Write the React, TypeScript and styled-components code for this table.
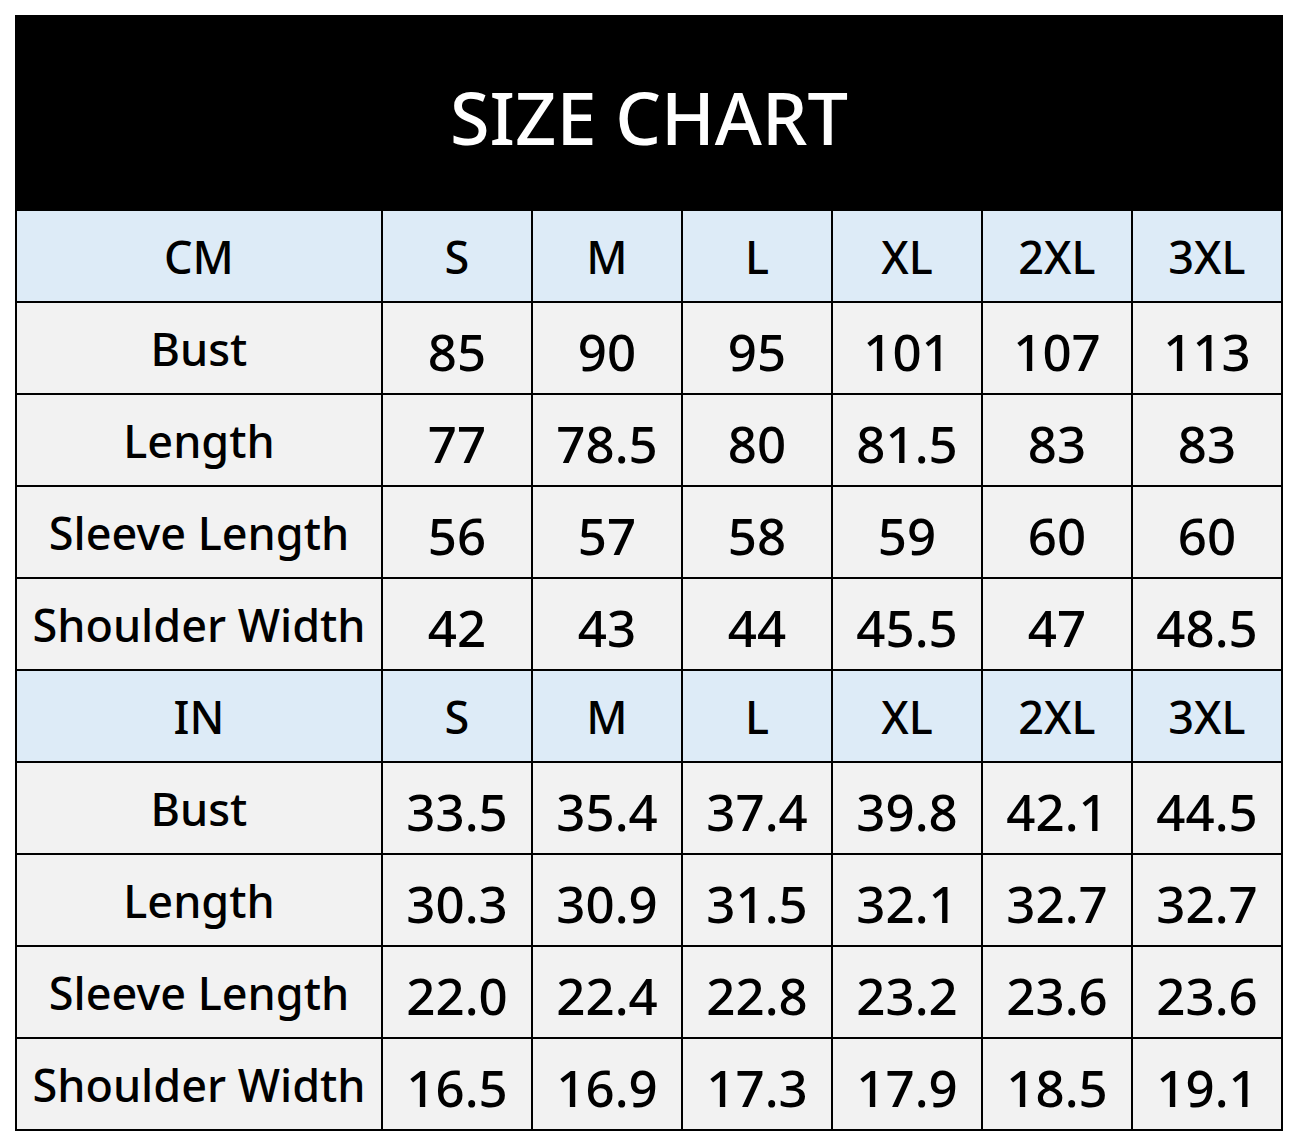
import styled, { createGlobalStyle } from 'styled-components';

const GlobalStyle = createGlobalStyle`
  body {
    margin: 0;
    padding: 15px;
    background: #fff;
    font-family: "Noto Sans", "Open Sans", sans-serif;
  }
`;

const Chart = styled.div`
  width: 1268px;
  box-sizing: border-box;
  background: #000;
  padding: 2px;
  display: grid;
  grid-template-columns: 364px repeat(6, 148px);
  grid-template-rows: 192px;
  grid-auto-rows: 90px;
  gap: 2px;
`;

const Title = styled.div`
  grid-column: 1 / -1;
  display: flex;
  align-items: center;
  justify-content: center;
  color: #fff;
  font-size: 72px;
  font-weight: 500;
  padding-top: 8px;
`;

const Cell = styled.div<{ $head?: boolean; $label?: boolean }>`
  display: flex;
  align-items: center;
  justify-content: center;
  background: ${(p) => (p.$head ? '#ddebf7' : '#f2f2f2')};
  color: #000;
  font-size: ${(p) => (p.$head || p.$label ? '45px' : '51px')};
  font-weight: 500;
  white-space: nowrap;
  padding-top: ${(p) => (p.$head || p.$label ? '0' : '6px')};
`;

const sizes = ['S', 'M', 'L', 'XL', '2XL', '3XL'];

const sections = [
  {
    unit: 'CM',
    rows: [
      ['Bust', '85', '90', '95', '101', '107', '113'],
      ['Length', '77', '78.5', '80', '81.5', '83', '83'],
      ['Sleeve Length', '56', '57', '58', '59', '60', '60'],
      ['Shoulder Width', '42', '43', '44', '45.5', '47', '48.5'],
    ],
  },
  {
    unit: 'IN',
    rows: [
      ['Bust', '33.5', '35.4', '37.4', '39.8', '42.1', '44.5'],
      ['Length', '30.3', '30.9', '31.5', '32.1', '32.7', '32.7'],
      ['Sleeve Length', '22.0', '22.4', '22.8', '23.2', '23.6', '23.6'],
      ['Shoulder Width', '16.5', '16.9', '17.3', '17.9', '18.5', '19.1'],
    ],
  },
];

export default function App() {
  return (
    <>
      <GlobalStyle />
      <Chart>
        <Title>SIZE CHART</Title>
        {sections.map(({ unit, rows }) => [
          <Cell $head key={unit}>{unit}</Cell>,
          ...sizes.map((s) => (
            <Cell $head key={unit + s}>
              {s}
            </Cell>
          )),
          ...rows.flatMap((row) =>
            row.map((v, i) => (
              <Cell $label={i === 0} key={unit + row[0] + i}>
                {v}
              </Cell>
            ))
          ),
        ])}
      </Chart>
    </>
  );
}
